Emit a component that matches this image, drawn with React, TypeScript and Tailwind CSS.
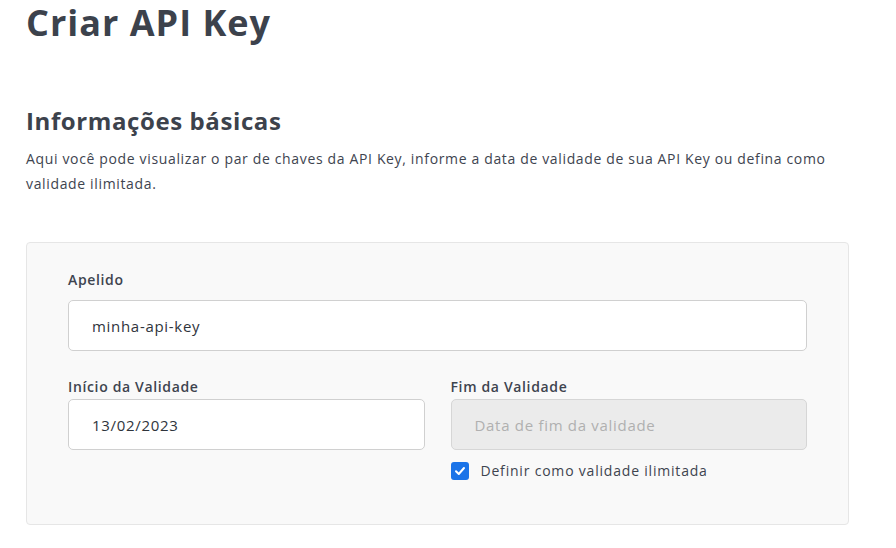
import React, { useState } from "react";

const font = { fontFamily: '"Open Sans", "Noto Sans", sans-serif' };

const App: React.FC = () => {
  const [apelido, setApelido] = useState<string>("minha-api-key");
  const [inicio, setInicio] = useState<string>("13/02/2023");
  const [ilimitada, setIlimitada] = useState<boolean>(true);

  return (
    <div className="min-h-[548px] bg-white text-[#3e444f] px-[26px] pt-[1px] tracking-[0.65px]" style={font}>
      <h1 className="text-[36px] font-bold leading-[44px] tracking-[1px] text-[#3c424c]">Criar API Key</h1>

      <h2 className="mt-[60px] text-[24px] font-bold leading-[32px] tracking-[0.6px] text-[#3c424c]">Informações básicas</h2>
      <p className="mt-[9px] text-[14px] leading-[25px] pr-[40px]">
        Aqui você pode visualizar o par de chaves da API Key, informe a data de validade de sua API Key ou defina como
        validade ilimitada.
      </p>

      <div className="mt-[46px] w-[823px] border border-[#e6e6e6] rounded-[4px] bg-[#f9f9f9] px-[41px] pt-[27px] pb-[43px]">
        <label className="block text-[14px] font-semibold leading-[20px] text-[#3e444f]">Apelido</label>
        <input
          type="text"
          value={apelido}
          onChange={(e) => setApelido(e.target.value)}
          className="mt-[10px] w-full h-[51px] bg-white border border-[#d0d0d0] rounded-[5px] px-[23px] text-[15px] tracking-[0.7px] text-[#2f343c] outline-none"
        />

        <div className="mt-[26px] grid grid-cols-2 gap-[26px]">
          <div>
            <label className="block text-[14px] font-semibold leading-[20px]">Início da Validade</label>
            <input
              type="text"
              value={inicio}
              onChange={(e) => setInicio(e.target.value)}
              className="mt-[2px] w-full h-[51px] bg-white border border-[#d0d0d0] rounded-[5px] px-[23px] text-[15px] tracking-[0.7px] text-[#2f343c] outline-none"
            />
          </div>
          <div>
            <label className="block text-[14px] font-semibold leading-[20px]">Fim da Validade</label>
            <input
              type="text"
              disabled
              placeholder="Data de fim da validade"
              className="mt-[2px] w-full h-[51px] bg-[#ebebeb] border border-[#d6d6d6] rounded-[5px] px-[23px] text-[15px] tracking-[0.7px] placeholder:text-[#b0b0b0] outline-none"
            />
            <label className="mt-[11px] flex items-center gap-[12px] cursor-pointer">
              <span
                onClick={() => setIlimitada(!ilimitada)}
                className={
                  ilimitada
                    ? "w-[18px] h-[18px] rounded-[3px] bg-[#1a73e8] flex items-center justify-center"
                    : "w-[18px] h-[18px] rounded-[3px] bg-white border border-[#bbb]"
                }
              >
                {ilimitada && (
                  <svg width="12" height="12" viewBox="0 0 12 12" fill="none">
                    <path d="M2 6.2 L4.8 9 L10 3" stroke="white" strokeWidth="2" strokeLinecap="round" strokeLinejoin="round" />
                  </svg>
                )}
              </span>
              <span className="text-[14px] leading-[20px] tracking-[0.8px] text-[#3e444f]">Definir como validade ilimitada</span>
            </label>
          </div>
        </div>
      </div>
    </div>
  );
};

export default App;
